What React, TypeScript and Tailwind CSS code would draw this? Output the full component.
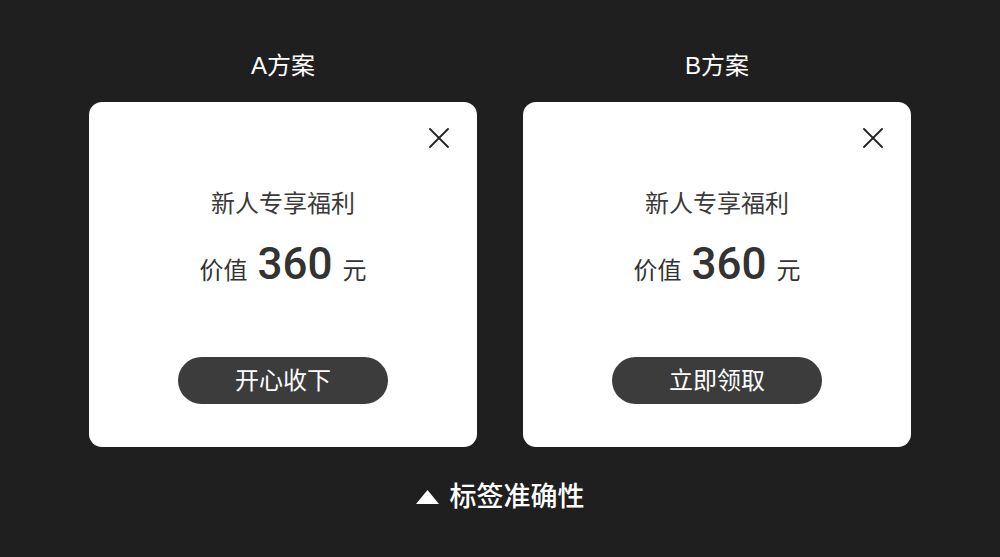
import React from "react";

type Plan = {
	title: string;
	action: string;
};

const plans: Plan[] = [
	{ title: "A方案", action: "开心收下" },
	{ title: "B方案", action: "立即领取" },
];

const font = "font-['Liberation_Sans','Noto_Sans_CJK_SC',sans-serif]";

const CloseIcon = () => (
	<svg width="20" height="20" viewBox="0 0 20 20" fill="none">
		<path d="M1 1L19 19M19 1L1 19" stroke="#222" strokeWidth="1.8" strokeLinecap="round" />
	</svg>
);

const PlanCard = ({ plan }: { plan: Plan }) => (
	<div className="flex flex-col items-center w-[388px]">
		<h2 className="text-[24px] leading-[32px] text-white">{plan.title}</h2>
		<div className="relative mt-[20px] flex h-[345px] w-full flex-col items-center rounded-[13px] bg-white pt-[86px] pb-[43px]">
			<span className="absolute top-[26px] right-[28px]">
				<CloseIcon />
			</span>
			<p className="text-[24px] leading-[32px] text-[#3a3a3a]">新人专享福利</p>
			<div className="mt-[22px] flex items-baseline text-[#333]">
				<span className="text-[24px] leading-none">价值</span>
				<span className="mx-[10px] font-['Roboto',sans-serif] text-[44px] font-medium leading-none">360</span>
				<span className="text-[24px] leading-none">元</span>
			</div>
			<button className="mt-auto h-[47px] w-[210px] rounded-full bg-[#3c3c3c] text-[24px] leading-none text-white">
				{plan.action}
			</button>
		</div>
	</div>
);

export default function App() {
	return (
		<div className={`flex h-[557px] w-[1000px] flex-col items-center bg-[#1f1f1f] pt-[50px] ${font}`}>
			<div className="flex gap-[46px]">
				{plans.map((plan) => (
					<PlanCard key={plan.title} plan={plan} />
				))}
			</div>
			<div className="mt-[32px] flex items-center gap-[11px] text-white">
				<svg width="23" height="14" viewBox="0 0 23 14">
					<path d="M11.5 0L23 14H0Z" fill="#fff" />
				</svg>
				<span className="text-[27px] font-medium leading-[36px]">标签准确性</span>
			</div>
		</div>
	);
}
